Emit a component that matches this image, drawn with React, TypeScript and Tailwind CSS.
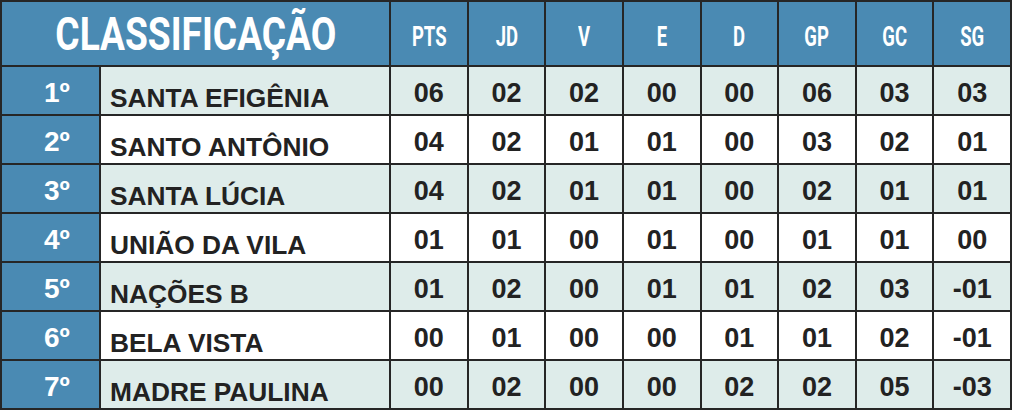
import React from "react";

const rows = [
  ["1º", "SANTA EFIGÊNIA", "06", "02", "02", "00", "00", "06", "03", "03"],
  ["2º", "SANTO ANTÔNIO", "04", "02", "01", "01", "00", "03", "02", "01"],
  ["3º", "SANTA LÚCIA", "04", "02", "01", "01", "00", "02", "01", "01"],
  ["4º", "UNIÃO DA VILA", "01", "01", "00", "01", "00", "01", "01", "00"],
  ["5º", "NAÇÕES B", "01", "02", "00", "01", "01", "02", "03", "-01"],
  ["6º", "BELA VISTA", "00", "01", "00", "00", "01", "01", "02", "-01"],
  ["7º", "MADRE PAULINA", "00", "02", "00", "00", "02", "02", "05", "-03"],
];

const heads = ["PTS", "JD", "V", "E", "D", "GP", "GC", "SG"];

export default function App() {
  return (
    <div className="w-[1014px] h-[411px] bg-white">
      <div
        className="grid w-[1012px] bg-[#262626] p-[2px] gap-[2px] grid-cols-[97px_288px_repeat(8,1fr)] grid-rows-[63px_repeat(7,47px)]"
        style={{ fontFamily: '"Liberation Sans", Arial, sans-serif' }}
      >
        <div className="col-span-2 bg-[#4a8ab3] flex items-end justify-center pb-[8px]">
          <span
            className="text-white font-bold text-[47px] leading-none scale-x-[0.79] inline-block whitespace-nowrap"
            style={{ fontFamily: "Roboto, sans-serif" }}
          >
            CLASSIFICAÇÃO
          </span>
        </div>
        {heads.map((h) => (
          <div key={h} className="bg-[#4a8ab3] flex items-end justify-center pb-[14px]">
            <span
              className="text-white font-bold text-[28px] leading-none scale-x-[0.66] inline-block"
              style={{ fontFamily: "Roboto, sans-serif" }}
            >
              {h}
            </span>
          </div>
        ))}
        {rows.map((r, i) => {
          const bg = i % 2 === 0 ? "bg-[#deecea]" : "bg-white";
          return (
            <React.Fragment key={r[0]}>
              <div className="bg-[#4a8ab3] flex items-end justify-start pl-[42px] pb-[7px]">
                <span className="text-white font-bold text-[28px] leading-none">{r[0]}</span>
              </div>
              <div className={`${bg} flex items-end pl-[9px] pb-[3px]`}>
                <span className="text-[#222222] font-bold text-[26.3px] leading-none whitespace-nowrap">{r[1]}</span>
              </div>
              {r.slice(2).map((v, j) => (
                <div key={j} className={`${bg} flex items-end justify-center pb-[7px]`}>
                  <span className="text-[#222222] font-bold text-[27px] leading-none">{v}</span>
                </div>
              ))}
            </React.Fragment>
          );
        })}
      </div>
    </div>
  );
}
